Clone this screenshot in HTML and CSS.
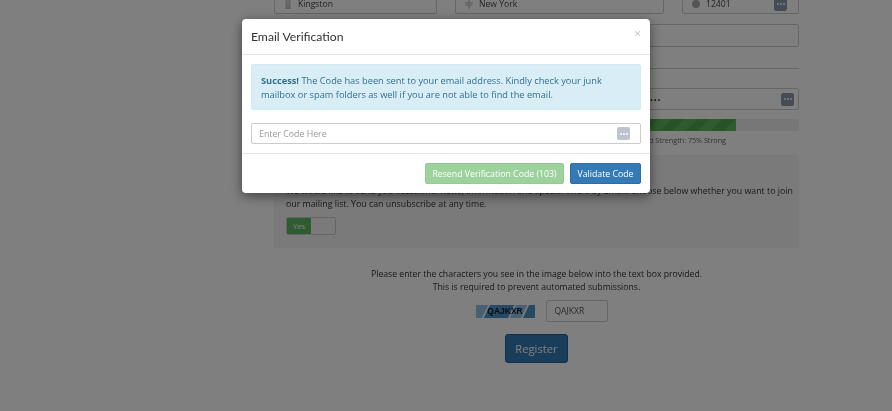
FILE: index.html
```html
<!DOCTYPE html>
<html lang="en">
<head>
<meta charset="utf-8">
<title>Email Verification</title>
<link rel="stylesheet" href="styles.css">
</head>
<body>
<main class="page">
  <div class="row-address">
    <div class="field f-city"><svg class="ficon" width="6" height="10" viewBox="0 0 10 13" preserveAspectRatio="none"><path d="M1 0h8v13H1z" fill="#bbb"/><path d="M3 2h1.500v1.500H3zM5.500 2H7v1.500H5.500zM3 5h1.500v1.500H3zM5.500 5H7v1.500H5.500zM3 8h1.500v1.500H3zM5.500 8H7v1.500H5.500z" fill="#fff"/></svg><span>Kingston</span></div>
    <div class="field f-state"><svg class="ficon" width="8" height="9" viewBox="0 0 12 13"><path d="M5 0h2v3h5v2H0V3h5zM1 6h10v2H7v5H5V8H1z" fill="#bbb"/></svg><span>New York</span></div>
    <div class="field f-zip"><span class="dot"></span><span class="zip">12401</span><span class="dots-btn"><i></i><i></i><i></i></span></div>
  </div>
  <div class="field f-wide"></div>
  <hr class="rule">
  <div class="field f-pass"><span class="pw">••••••••••••••••••••••••••••••••••••••••••••••••••••••••••••••••••••••••••••••••••••••••••••••••••••••</span><span class="dots-btn"><i></i><i></i><i></i></span></div>
  <div class="progress"><div class="bar"></div></div>
  <p class="strength">Password Strength: 75% Strong</p>
  <section class="panel">
    <p class="panel-title">Join our mailing list</p>
    <p class="panel-text">We would like to send you occasional news, information and special offers by email. Choose below whether you want to join our mailing list. You can unsubscribe at any time.</p>
    <div class="toggle"><span class="toggle-on">Yes</span><span class="toggle-off"></span></div>
  </section>
  <div class="captcha-note">
    <p>Please enter the characters you see in the image below into the text box provided.</p>
    <p>This is required to prevent automated submissions.</p>
  </div>
  <div class="captcha-row">
    <div class="captcha-img"><span>QAJKXR</span></div>
    <div class="captcha-input">QAJKXR</div>
  </div>
  <div class="register-wrap"><button class="register" type="button">Register</button></div>
</main>
<div class="backdrop"></div>
<div class="modal">
  <header class="modal-head">
    <h4>Email Verification</h4>
    <span class="close">×</span>
  </header>
  <div class="modal-body">
    <div class="alert"><strong>Success!</strong> The Code has been sent to your email address. Kindly check your junk mailbox or spam folders as well if you are not able to find the email.</div>
    <div class="code-input"><span>Enter Code Here</span><span class="dots-btn light"><i></i><i></i><i></i></span></div>
  </div>
  <footer class="modal-foot">
    <button class="btn resend" type="button">Resend Verification Code (103)</button>
    <button class="btn validate" type="button">Validate Code</button>
  </footer>
</div>
</body>
</html>
```
FILE: styles.css
```css
* { box-sizing: border-box; }
html, body { margin: 0; height: 100%; overflow: hidden; }
body { background: #fff; font-family: "Open Sans", sans-serif; font-size: 10px; color: #333; filter: blur(0.45px); }
p { margin: 0; }

.page { width: 525px; margin: -6px 0 0 274px; }
.row-address { display: flex; gap: 18px; height: 20px; }
.field { display: flex; align-items: center; border: 1px solid #ccc; border-radius: 2px; background: #fff; }
.f-city { width: 163px; padding-left: 10px; }
.f-state { width: 209px; padding-left: 9px; }
.f-zip { width: 117px; padding: 0 11px 0 9px; }
.ficon { margin-right: 7px; flex: none; }
.f-state .ficon { margin-right: 6px; }
.field span { color: #444; font-size: 8.600px; }
.dot { width: 8px; height: 8px; border-radius: 50%; background: #aaa; margin-right: 6px; flex: none; }
.zip { flex: 1; }

.dots-btn { display: flex; align-items: center; justify-content: center; gap: 1px; width: 13px; height: 13px; border-radius: 2px; background: #8f97a8; flex: none; }
.dots-btn i { width: 2px; height: 2px; background: #fff; border-radius: 50%; }
.dots-btn.light { background: #bec3cf; }

.f-wide { margin-top: 10px; height: 23px; }
.rule { height: 1px; border: 0; margin: 21px 0 19px; background: #ccc; }
.f-pass { height: 22px; padding: 0 4px 0 10px; justify-content: space-between; }
.field .pw { display: block; width: 375px; overflow: hidden; font-size: 8px; letter-spacing: 0.68px; color: #222; white-space: nowrap; }
.progress { height: 12px; margin-top: 9px; background: #eee; border-radius: 2px; overflow: hidden; }
.bar { width: 462px; height: 100%; background: repeating-linear-gradient(-45deg, #5cb85c 0 9px, #4fa64f 9px 18px); }
.strength { margin-top: 2px; text-align: right; padding-right: 73px; font-size: 7.200px; line-height: 14px; color: #666; white-space: nowrap; }

.panel { height: 93px; margin-top: 8px; padding: 12px 12px 0; background: #f5f5f5; font-size: 8.800px; line-height: 13px; color: #333; }
.panel-title { height: 18px; }
.panel-text { width: 510px; }
.toggle { display: flex; width: 50px; height: 18px; margin-top: 6px; border: 1px solid #ccc; border-radius: 2px; overflow: hidden; }
.toggle-on { width: 24px; background: #5cb85c; color: #fff; font-size: 7.500px; line-height: 16px; text-align: center; }

.captcha-note { margin-top: 20px; text-align: center; font-size: 8.660px; line-height: 13px; color: #333; }
.captcha-row { display: flex; justify-content: center; align-items: center; gap: 11px; margin-top: 6px; padding-left: 10px; }
.captcha-img { width: 59px; height: 13px; background: linear-gradient(115deg, #8ec3e6 0 18%, #eef5fa 19% 21%, #4f93c4 22% 58%, #eef5fa 59% 61%, #8ec3e6 62% 78%, #eef5fa 79% 81%, #4f93c4 82%); text-align: center; font: bold 8.500px/13px "Liberation Sans", sans-serif; color: #071a2c; }
.captcha-input { width: 62px; height: 22px; border: 1px solid #ccc; border-radius: 2px; background: #fff; padding-left: 8px; font-size: 8.500px; line-height: 20px; color: #555; }
.register-wrap { display: flex; justify-content: center; margin-top: 12px; }
.register { width: 63px; height: 29px; border: 1px solid #285e8e; border-radius: 3px; background: #337ab7; color: #fff; font: 11.200px "Open Sans", sans-serif; padding: 0; }

.backdrop { position: fixed; inset: 0; background: rgba(0, 0, 0, 0.5); }
.modal { position: fixed; left: 242px; top: 19px; width: 408px; height: 174px; background: #fff; border-radius: 4px; box-shadow: 0 3px 12px rgba(0, 0, 0, 0.5); display: flex; flex-direction: column; }
.modal-head { position: relative; height: 36px; border-bottom: 1px solid #e5e5e5; padding: 0 9px; display: flex; align-items: center; }
.modal-head h4 { margin: 0; font: 400 12.200px "Lato", sans-serif; color: #333; }
.close { position: absolute; top: 7px; right: 9px; font-size: 12px; line-height: 16px; color: #c4c4c4; }
.modal-body { height: 99px; padding: 9px 9px 0; border-bottom: 1px solid #e5e5e5; }
.alert { height: 46px; padding: 9px 9px; background: #d9edf7; border: 1px solid #d1ebf4; border-radius: 2px; color: #31708f; font-size: 9.250px; line-height: 13.500px; }
.code-input { display: flex; align-items: center; justify-content: space-between; height: 21px; margin-top: 13px; padding: 0 10px 0 7px; border: 1px solid #ccc; border-radius: 2px; font-size: 8.800px; color: #999; }
.modal-foot { flex: 1; display: flex; justify-content: flex-end; align-items: flex-start; gap: 6px; padding: 9px 9px 0; }
.btn { height: 21px; border-radius: 2px; border: 1px solid transparent; color: #fff; font: 8.750px "Open Sans", sans-serif; padding: 0; white-space: nowrap; }
.resend { width: 139px; background: #9dd29d; border-color: #92cc92; }
.validate { width: 71px; background: #337ab7; border-color: #2e6da4; }
```
